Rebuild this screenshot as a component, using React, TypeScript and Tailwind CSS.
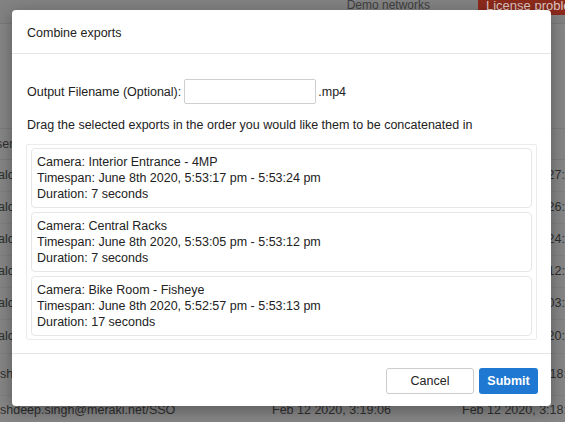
const exportsList = [
  {
    camera: 'Interior Entrance - 4MP',
    span: 'June 8th 2020, 5:53:17 pm - 5:53:24 pm',
    duration: '7 seconds',
  },
  {
    camera: 'Central Racks',
    span: 'June 8th 2020, 5:53:05 pm - 5:53:12 pm',
    duration: '7 seconds',
  },
  {
    camera: 'Bike Room - Fisheye',
    span: 'June 8th 2020, 5:52:57 pm - 5:53:13 pm',
    duration: '17 seconds',
  },
];

const rows = [
  { user: 'alcantara@meraki.net', at: 'Feb 12 2020, 3:27:01', end: 'Feb 12 2020, 3:27:04', h: 'h-[32px]' },
  { user: 'alcantara@meraki.net', at: 'Feb 12 2020, 3:26:21', end: 'Feb 12 2020, 3:26:24', h: 'h-[32px]' },
  { user: 'alcantara@meraki.net', at: 'Feb 12 2020, 3:24:11', end: 'Feb 12 2020, 3:24:14', h: 'h-[32px]' },
  { user: 'alcantara@meraki.net', at: 'Feb 12 2020, 3:23:12', end: 'Feb 12 2020, 3:12:12', h: 'h-[32px]' },
  { user: 'alcantara@meraki.net', at: 'Feb 12 2020, 3:21:03', end: 'Feb 12 2020, 3:03:03', h: 'h-[32px]' },
  { user: 'alcantara@meraki.net', at: 'Feb 12 2020, 3:20:20', end: 'Feb 12 2020, 3:20:20', h: 'h-[34px]' },
  { user: 'shdeep.singh@meraki.net/SSO', at: 'Feb 12 2020, 3:19:40', end: 'Feb 12 2020, 3:18:50', h: 'h-[42px]' },
  { user: 'shdeep.singh@meraki.net/SSO', at: 'Feb 12 2020, 3:19:06', end: 'Feb 12 2020, 3:18:45', h: 'h-[30px]' },
];

function BackgroundPage() {
  return (
    <div className="flex flex-col w-full h-full text-[12.5px] text-[#2e2e2e]">
      <div className="flex justify-end items-start h-[24px] shrink-0 border-b border-[#7a7a7a] bg-[#828282] overflow-hidden">
        <span className="mr-[48px] -mt-[4px] text-[12px] text-[#3f3f3f]">Demo networks</span>
        <span className="bg-[#8c2a1b] text-[#dcc6c2] text-[13px] pl-[8px] h-[15px] leading-[11px] w-[87px] whitespace-nowrap overflow-hidden">
          License problem
        </span>
      </div>
      <div className="h-[105px] shrink-0 border-b border-[#7c7c7c]" />
      <div className="flex items-center h-[31px] shrink-0 border-b border-[#7c7c7c] whitespace-nowrap">
        <span className="-ml-[13px]">User</span>
      </div>
      {rows.map((r, i) => (
        <div
          key={i}
          className={`flex items-center whitespace-nowrap border-b border-[#7f7f7f] shrink-0 ${r.h}`}
        >
          <span className={`w-[272px] shrink-0 ${i >= 6 ? 'ml-0' : '-ml-[2px]'}`}>{r.user}</span>
          <span className="w-[190px] shrink-0">{r.at}</span>
          <span>{r.end}</span>
        </div>
      ))}
    </div>
  );
}

export default function App() {
  return (
    <div
      className="relative w-[565px] h-[422px] overflow-hidden bg-[#868686]"
      style={{ fontFamily: '"Helvetica Neue", "Liberation Sans", Arial, sans-serif' }}
    >
      <BackgroundPage />

      <div className="absolute left-[12px] top-[10px] w-[539px] h-[396px] flex flex-col bg-white rounded-[4px] shadow-[0_4px_16px_rgba(0,0,0,0.35)] text-[12.5px] text-[#222]">
        <div className="h-[44px] shrink-0 flex items-center px-[15px] border-b border-[#e5e5e5]">
          <span className="text-[12.5px] mt-[3px]">Combine exports</span>
        </div>

        <div className="px-[14px] pt-[25px] flex-1">
          <div className="flex items-center h-[25px] leading-[16px] pl-[1px]">
            <span>Output Filename (Optional):</span>
            <input
              className="ml-[3px] w-[132px] h-[25px] border border-[#cfcfcf] rounded-[2px] outline-none px-[6px]"
              type="text"
            />
            <span className="ml-[2px]">.mp4</span>
          </div>

          <p className="mt-[13px] leading-[16px] pl-[1px]">
            Drag the selected exports in the order you would like them to be concatenated in
          </p>

          <div className="mt-[11px] border border-[#ececec] rounded-[2px] px-[4px] py-[3px] flex flex-col gap-[4px]">
            {exportsList.map((e) => (
              <div
                key={e.camera}
                className="h-[60px] border border-[#e6e6e6] rounded-[4px] px-[5px] pt-[5px] leading-[16px]"
              >
                <div>Camera: {e.camera}</div>
                <div>Timespan: {e.span}</div>
                <div>Duration: {e.duration}</div>
              </div>
            ))}
          </div>
        </div>

        <div className="border-t border-[#e5e5e5] h-[53px] shrink-0 flex items-center justify-end gap-[5px] pr-[13px] pt-[2px]">
          <button className="h-[26px] w-[88px] border border-[#cccccc] rounded-[3px] bg-white text-[12.5px] text-[#222]">
            Cancel
          </button>
          <button className="h-[26px] w-[59px] rounded-[3px] bg-[#1f78d1] text-white text-[12.5px] font-bold">
            Submit
          </button>
        </div>
      </div>
    </div>
  );
}
